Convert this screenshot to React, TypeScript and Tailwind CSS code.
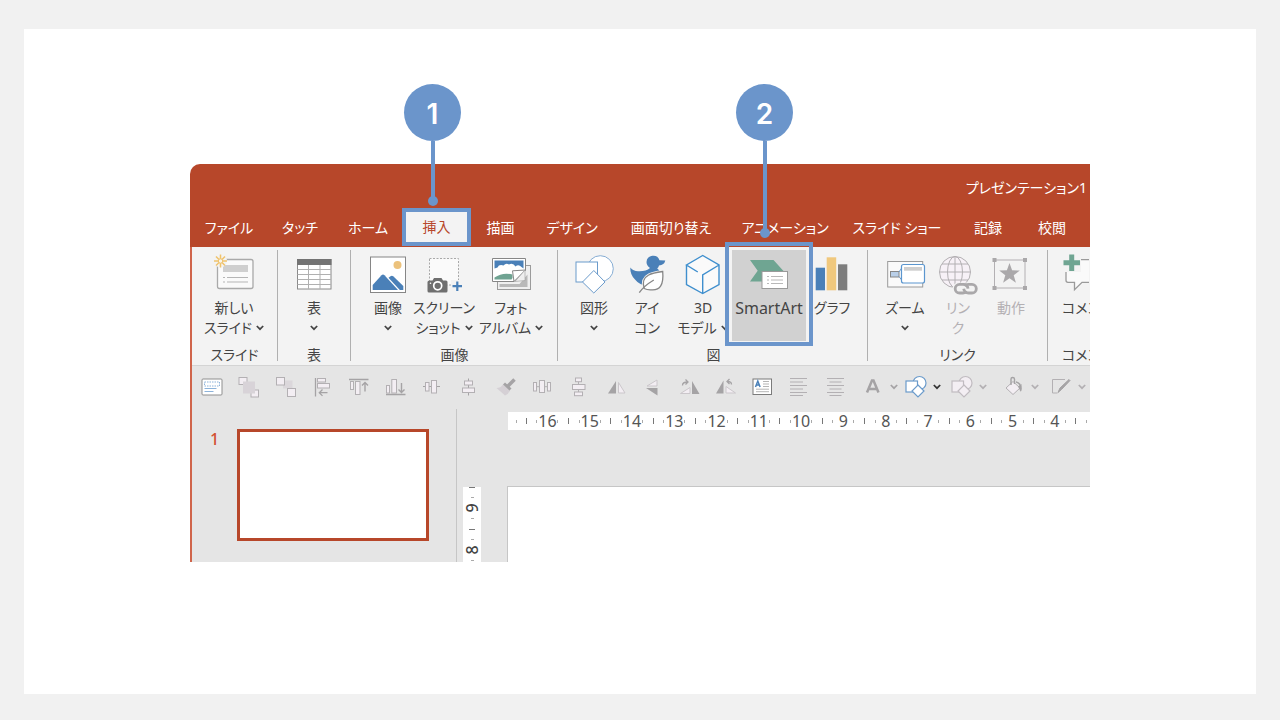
import type { ReactNode } from 'react';

const GRAY = '#b3b0b3';
const BLUE = '#4a80b8';

/* ---------- Ribbon icons (40 x 38) ---------- */

function Icon({ children }: { children: ReactNode }) {
  return (
    <svg className="h-[38px] w-10 shrink-0 overflow-visible" viewBox="0 0 40 38" fill="none" aria-hidden="true">
      {children}
    </svg>
  );
}

const NewSlideIcon = () => (
  <Icon>
    <rect x="3.5" y="4.5" width="35.5" height="29" rx="2" fill="#fafafa" stroke="#a9a9a9" strokeWidth="1.3" />
    <rect x="9" y="10" width="25" height="7" fill="#cfcfcf" />
    <path d="M9 22.5h2M13 22.5h21M9 27h2M13 27h21" stroke="#b5b5b5" />
    <circle cx="6.5" cy="6" r="6.5" fill="#f3f3f3" />
    <path d="M6.5-.5v13M0 6h13M2 1.5l9 9M11 1.5l-9 9" stroke="#f0c36c" strokeWidth="1.5" />
    <circle cx="6.5" cy="6" r="2.2" fill="#f8f4ea" stroke="#f0c36c" />
  </Icon>
);

const TableIcon = () => (
  <Icon>
    <rect x="3.5" y="4.5" width="33.5" height="29.5" fill="#fff" stroke="#8a8a8a" />
    <rect x="3" y="4" width="34.5" height="6" fill="#737373" />
    <path d="M3.5 14.5h33.5M3.5 19.5h33.5M3.5 24.5h33.5M3.5 29.5h33.5M14.5 10v24M26 10v24" stroke="#b0b0b0" />
  </Icon>
);

const PictureIcon = () => (
  <Icon>
    <rect x="2.5" y="2" width="35" height="35.5" fill="#fff" stroke="#868686" />
    <circle cx="29.5" cy="10" r="4" fill="#ecc27c" />
    <path d="M4.7 35v-5L13.500 20.300q1.500-1.400 3 0L30 35z" fill={BLUE} />
    <path d="M20.500 22.800l2-1.600q1.500-1 3 .3L35.300 31v4h-3.500z" fill={BLUE} />
  </Icon>
);

const ScreenshotIcon = () => (
  <Icon>
    <rect x="5.5" y="3.5" width="29" height="26.5" fill="#fafafa" stroke="#a8a8a8" strokeDasharray="2 1.500" />
    <path d="M5.500 25.500h3l1.500-2.500h7.500l1.500 2.500h3q1.500 0 1.500 1.500v9q0 1.500-1.500 1.500H5q-1.500 0-1.500-1.500v-9q0-1.500 2-1.500z" fill="#6f6f6f" />
    <circle cx="13.7" cy="30.8" r="4" stroke="#fff" strokeWidth="1.7" />
    <circle cx="6.5" cy="28.3" r=".8" fill="#fff" />
    <rect x="27" y="25" width="13" height="12" fill="#f3f3f3" />
    <path d="M33.300 26.500v9.500M28.500 31.200h9.500" stroke={BLUE} strokeWidth="2.2" />
  </Icon>
);

const AlbumIcon = () => (
  <Icon>
    <rect x="6.5" y="10.5" width="33" height="24" fill="#efefef" stroke="#9b9b9b" />
    <path d="M8.500 32v-3h20l8-9.500v12.500z" fill="#b9b9b9" />
    <path d="M1.500 3.500h33v11.500L23 26.500H1.500z" fill="#fff" stroke="#868686" />
    <path d="M3.500 5.500h29v8l-2-1.500q-3-3-6-.5-2.500-4-6.500-2-3-2-5.500 1-4.500-1.500-6 2l-3 1z" fill={BLUE} />
    <path d="M3.500 22.500q8-5.500 18-3v3.500l-1 1.500h-17z" fill="#6fa392" />
    <path d="M34.500 15L21.500 15.800 23 26.500z" fill="#fff" stroke="#868686" />
    <path d="M34 15v10.500L24 26.500z" fill="#efefef" stroke="#9b9b9b" strokeWidth=".6" />
  </Icon>
);

const ShapesIcon = () => (
  <Icon>
    <circle cx="26.3" cy="13.7" r="13" fill="#fff" stroke="#86add4" />
    <rect x="2" y="7" width="21.5" height="20" fill="#fff" stroke="#6b9bcb" />
    <path d="M19.800 15.500L31 27 19.800 38 8.500 27z" fill="#fff" stroke="#6b9bcb" />
  </Icon>
);

const DuckIcon = () => (
  <Icon>
    <path d="M19.500 7a6.700 6.700 0 0 1 13-1.800l5.800.4q-1 4.500-6.300 5-.4 1.800-1.800 3 4 2.500 2.800 8.500-2 8-11 8.500-9 .5-14-6Q3 19.500 3.300 12.500q3.200 4 8.200 3.800 7.500.3 11.500-3.300Q19.500 10.500 19.500 7z" fill={BLUE} />
    <path d="M35.700 16.500q1.800 19.500-11.500 18.300-4 .2-7-1.300-3-9.500 4.500-13.500 3.500-2 14-3.500z" fill="#fff" stroke="#f3f3f3" strokeWidth="3" />
    <path d="M35.700 16.500q1.800 19.500-11.500 18.300-4 .2-7-1.300-3-9.500 4.500-13.500 3.500-2 14-3.500z" fill="#fff" stroke="#868686" strokeWidth="1.3" />
    <path d="M12.300 37.700q4.500-6.700 14.500-12.700" stroke="#868686" strokeWidth="1.3" />
  </Icon>
);

const CubeIcon = () => (
  <Icon>
    <path d="M19.700.5L36 10v19.500L19.700 38.500 3.500 29.500V10z" fill="#fafafa" />
    <path d="M14.800 17L3.500 10 19.700.5 36 10v19.500L19.700 38.500 3.500 29.500V10M36 10L19.700 20v18.500" stroke="#3f8fce" strokeWidth="1.4" />
  </Icon>
);

const SmartArtIcon = () => (
  <Icon>
    <path d="M1 5h23.500l10 11v10.500H1l7.700-10.700z" fill="#6fa592" />
    <rect x="13" y="16.5" width="25.5" height="17" fill="#fff" stroke="#9a9a9a" />
    <path d="M18 21.500h2M22 21.500h12M18 25h2M22 25h12M18 28.500h2M22 28.500h12" stroke="#b8b8b8" />
  </Icon>
);

const ChartIcon = () => (
  <Icon>
    <rect x="3.7" y="12.7" width="9.3" height="22.6" fill={BLUE} />
    <rect x="14.7" y="2.3" width="9.5" height="33" fill="#f0c87d" />
    <rect x="26" y="9.3" width="9.3" height="26" fill="#7d7d7d" />
  </Icon>
);

const ZoomIcon = () => (
  <Icon>
    <rect x="2.7" y="6.5" width="35" height="25.5" fill="#fafafa" stroke="#9a9a9a" />
    <rect x="5.5" y="16.5" width="8.5" height="5.5" fill="#b9cfe8" stroke="#868686" />
    <path d="M14 17l3-4.500M14 21.500l3 4" stroke="#6b9bcb" />
    <rect x="16.5" y="9.5" width="23" height="18.5" rx="2" fill="#fff" stroke="#5b96cf" strokeWidth="1.2" />
    <rect x="19" y="12" width="18" height="3.7" fill="#cfcfcf" />
  </Icon>
);

const LinkIcon = () => (
  <Icon>
    <g stroke={GRAY}>
      <circle cx="17" cy="17" r="15.5" fill="#f7f1f7" />
      <ellipse cx="17" cy="17" rx="7.5" ry="15.5" />
      <path d="M17 1.500v31M1.500 17h31M4 9h26M4 25h26" />
    </g>
    <rect x="14.5" y="27.5" width="27" height="13" rx="6" fill="#f3f3f3" />
    <g stroke="#aaa8aa" strokeWidth="2.8">
      <path d="M29 36.500q-1.200 1.500-4 1.500h-3.500a4.300 4.300 0 0 1 0-8.600h4q4 0 4.500 4.300" />
      <path d="M26.500 31q1-1.600 4-1.600H34a4.300 4.300 0 0 1 0 8.600h-3.500q-4 0-4.800-4.300" />
    </g>
  </Icon>
);

const ActionIcon = () => (
  <Icon>
    <rect x="3.5" y="5" width="30.5" height="28" stroke={GRAY} />
    <g fill="#aaa8aa">
      <path d="M1.500 3h4v4h-4zM32 3h4v4h-4zM1.500 31h4v4h-4zM32 31h4v4h-4z" />
      <path d="M18.500 8l2.600 7.300 7.700.2-6.100 4.700 2.200 7.500-6.400-4.400-6.400 4.400 2.200-7.500-6.100-4.700 7.700-.2z" />
    </g>
  </Icon>
);

const CommentIcon = () => (
  <Icon>
    <path d="M19 4.700h8v22.600h-7l-7.500 7.500v-7.500H6q-2 0-2-2V14" fill="#fafafa" />
    <path d="M19 4.700h8M27 27.300h-7l-7.500 7.500v-7.500H6q-2 0-2-2V14" stroke="#9a9a9a" strokeWidth="1.3" />
    <path d="M0-1h19v18H0z" fill="#f3f3f3" />
    <path d="M9.700-.5v16.500M1.500 7.700h16.500" stroke="#6fa592" strokeWidth="5" />
  </Icon>
);

function Chevron({ color = '#444' }: { color?: string }) {
  return (
    <svg className="h-2 w-2 shrink-0" viewBox="0 0 8 8" fill="none" aria-hidden="true">
      <path d="M.8 2L4 5.200 7.200 2" stroke={color} strokeWidth="1.7" />
    </svg>
  );
}

/* ---------- Ribbon ---------- */

type Command = {
  icon: ReactNode;
  lines: string[];
  width: string;
  menu?: boolean;
  disabled?: boolean;
  active?: boolean;
  left?: boolean;
};

type Group = { label: string; className: string; labelClass?: string; commands: Command[] };

const groups: Group[] = [
  {
    label: 'スライド',
    className: 'w-[86px] border-r',
    commands: [{ icon: <NewSlideIcon />, lines: ['新しい', 'スライド'], width: 'w-[84px]', menu: true }],
  },
  {
    label: '表',
    className: 'w-[73px] border-r',
    commands: [{ icon: <TableIcon />, lines: ['表', ''], width: 'w-[72px]', menu: true }],
  },
  {
    label: '画像',
    className: 'w-[207px] border-r pl-[9px]',
    labelClass: 'pr-2',
    commands: [
      { icon: <PictureIcon />, lines: ['画像', ''], width: 'w-14', menu: true },
      { icon: <ScreenshotIcon />, lines: ['スクリーン', 'ショット'], width: 'w-14', menu: true },
      { icon: <AlbumIcon />, lines: ['フォト', 'アルバム'], width: 'w-[78px]', menu: true },
    ],
  },
  {
    label: '図',
    className: 'w-[310px] border-r pl-[10px]',
    labelClass: 'pr-2',
    commands: [
      { icon: <ShapesIcon />, lines: ['図形', ''], width: 'w-[52px]', menu: true },
      { icon: <DuckIcon />, lines: ['アイ', 'コン'], width: 'w-[54px]' },
      { icon: <CubeIcon />, lines: ['3D', 'モデル'], width: 'w-[58px]', menu: true },
      { icon: <SmartArtIcon />, lines: ['SmartArt'], width: 'w-[74px]', active: true },
      { icon: <ChartIcon />, lines: ['グラフ'], width: 'w-[52px]' },
    ],
  },
  {
    label: 'リンク',
    className: 'w-[180px] border-r pl-2',
    labelClass: 'pr-2',
    commands: [
      { icon: <ZoomIcon />, lines: ['ズーム', ''], width: 'w-[58px]', menu: true },
      { icon: <LinkIcon />, lines: ['リン', 'ク'], width: 'w-12', disabled: true },
      { icon: <ActionIcon />, lines: ['動作'], width: 'w-[58px]', disabled: true },
    ],
  },
  {
    label: 'コメント',
    className: 'w-[90px] pl-[14px]',
    labelClass: 'text-left',
    commands: [{ icon: <CommentIcon />, lines: ['コメント'], width: 'w-[60px]', left: true }],
  },
];

function CommandButton({ icon, lines, width, menu, disabled, active, left }: Command) {
  return (
    <button
      type="button"
      disabled={disabled}
      className={`${width} flex h-[91px] shrink-0 flex-col pt-[5px] ${left ? 'items-start' : 'items-center'} ${
        active ? 'bg-[#d1d1d1] text-base' : ''
      } ${disabled ? 'text-[#b3b0b3]' : 'text-[#444]'}`}
    >
      {icon}
      <span className={`mt-[5px] flex flex-col whitespace-nowrap leading-5 ${left ? 'items-start' : 'items-center'}`}>
        {lines.map((line, i) => (
          <span key={i} className="flex h-5 items-center gap-1">
            {line}
            {menu && i === lines.length - 1 && <Chevron />}
          </span>
        ))}
      </span>
    </button>
  );
}

function Ribbon() {
  return (
    <div className="flex overflow-hidden border-b border-[#d4d4d4] bg-[#f3f3f3] pb-1 pt-[3px] text-sm text-[#444]">
      {groups.map((group) => (
        <section key={group.label} className={`${group.className} shrink-0 border-[#b0b0b0]`}>
          <div className="flex">
            {group.commands.map((command) => (
              <CommandButton key={command.lines[0]} {...command} />
            ))}
          </div>
          <h2 className={`${group.labelClass ?? ''} h-5 whitespace-nowrap pt-1 text-center leading-5`}>{group.label}</h2>
        </section>
      ))}
    </div>
  );
}

/* ---------- Quick access toolbar (24 x 24 icons) ---------- */

const LIGHT = '#f3eef3';

const quickTools: { name: string; icon: ReactNode }[] = [
  {
    name: 'layout',
    icon: (
      <>
        <rect x="2" y="4" width="20" height="16" rx="1" fill="#fff" stroke="#8f8f8f" />
        <rect x="4.5" y="7" width="15" height="4" stroke="#8db3da" strokeDasharray="1.500 1" />
        <path d="M4.500 13.500h12M4.500 16.500h9" stroke="#8db3da" />
      </>
    ),
  },
  {
    name: 'bring-forward',
    icon: (
      <>
        <rect x="2" y="2.5" width="8" height="7" fill={LIGHT} stroke={GRAY} />
        <rect x="14" y="15" width="7.5" height="7" fill={LIGHT} stroke={GRAY} />
        <rect x="6" y="6.5" width="12" height="12" fill="#d8d3d8" />
      </>
    ),
  },
  {
    name: 'send-backward',
    icon: (
      <>
        <rect x="9" y="5.5" width="9.5" height="8" fill="#dbd7db" />
        <rect x="2.5" y="2.5" width="8" height="7.5" fill={LIGHT} stroke={GRAY} />
        <rect x="13.5" y="13.5" width="8" height="8" fill={LIGHT} stroke={GRAY} />
      </>
    ),
  },
  {
    name: 'align-left',
    icon: (
      <>
        <path d="M5.500 3v18.500M17.500 17.700H9.500M12.500 14.500l-3.200 3.200 3.200 3.200" stroke="#a5a3a5" strokeWidth="1.3" />
        <rect x="7.5" y="3.5" width="8" height="3.5" fill={LIGHT} stroke={GRAY} />
        <rect x="7.5" y="8.5" width="12" height="4.5" fill={LIGHT} stroke={GRAY} />
      </>
    ),
  },
  {
    name: 'align-top',
    icon: (
      <>
        <path d="M2 4.500h19.500M18 16.500V7.500M15 10.500l3-3 3 3" stroke="#a5a3a5" strokeWidth="1.4" />
        <rect x="3.5" y="6.5" width="3" height="8" fill={LIGHT} stroke={GRAY} />
        <rect x="8.5" y="6.5" width="4.5" height="13" fill={LIGHT} stroke={GRAY} />
      </>
    ),
  },
  {
    name: 'align-bottom',
    icon: (
      <>
        <path d="M2 19.500h19.500M17.500 8v9M14.500 14.500l3 3 3-3" stroke="#a5a3a5" strokeWidth="1.4" />
        <rect x="2.5" y="10.5" width="3" height="7.5" fill={LIGHT} stroke={GRAY} />
        <rect x="7.8" y="4.5" width="4.7" height="13.5" fill={LIGHT} stroke={GRAY} />
      </>
    ),
  },
  {
    name: 'align-middle',
    icon: (
      <>
        <path d="M3 11.500h17" stroke="#a5a3a5" />
        <rect x="5.5" y="7.5" width="3.5" height="8.5" fill={LIGHT} stroke={GRAY} />
        <rect x="11.5" y="5.5" width="5" height="12.5" fill={LIGHT} stroke={GRAY} />
      </>
    ),
  },
  {
    name: 'align-center',
    icon: (
      <>
        <path d="M11.500 3.500v17" stroke="#a5a3a5" />
        <rect x="7.5" y="6" width="8" height="4" fill={LIGHT} stroke={GRAY} />
        <rect x="5.5" y="13" width="12" height="4.5" fill={LIGHT} stroke={GRAY} />
      </>
    ),
  },
  {
    name: 'format-painter',
    icon: (
      <>
        <path d="M2.500 13q4 0 6.500-3.500l7 6q-1.500 3.500-5 5z" fill="#d5d0d5" />
        <path d="M10 8.500l6.500 6" stroke="#a5a3a5" strokeWidth="3" />
        <path d="M13.500 11.500l7-7" stroke="#a5a3a5" strokeWidth="3.5" />
      </>
    ),
  },
  {
    name: 'distribute-horizontally',
    icon: (
      <g fill={LIGHT} stroke={GRAY}>
        <path d="M6 11.700h12" />
        <rect x="3.5" y="7.5" width="3" height="8.5" />
        <rect x="9.5" y="5.5" width="5" height="12" />
        <rect x="17.5" y="7.5" width="3" height="8.5" />
      </g>
    ),
  },
  {
    name: 'distribute-vertically',
    icon: (
      <g fill={LIGHT} stroke={GRAY}>
        <path d="M11.500 7v10" />
        <rect x="8.5" y="3" width="6" height="3.7" />
        <rect x="5.5" y="9.5" width="12.5" height="5" />
        <rect x="7.5" y="17" width="8" height="3.7" />
      </g>
    ),
  },
  {
    name: 'flip-horizontal',
    icon: (
      <>
        <path d="M4 18.500L12 6v12.500z" fill="#a5a3a5" />
        <path d="M14.500 7.500v10.500h6.500z" fill={LIGHT} stroke="#cbc7cb" />
      </>
    ),
  },
  {
    name: 'flip-vertical',
    icon: (
      <>
        <path d="M7 11L17 5v6z" fill={LIGHT} stroke="#cbc7cb" />
        <path d="M6 13h11.500v7.500z" fill="#a5a3a5" />
      </>
    ),
  },
  {
    name: 'rotate-right',
    icon: (
      <>
        <path d="M3.500 18.500l9.500-6v6z" fill={LIGHT} stroke="#cbc7cb" />
        <path d="M15 6l7.500 13H15z" fill="#a5a3a5" />
        <path d="M5.500 10.500q0-3.500 5-3.500M8.500 4.500L11 7l-2.500 2.500" stroke="#a5a3a5" strokeWidth="1.3" />
      </>
    ),
  },
  {
    name: 'rotate-left',
    icon: (
      <>
        <path d="M2 18.500L9.500 5.500v13z" fill="#a5a3a5" />
        <path d="M12 11.500l9.500 6.500H12z" fill={LIGHT} stroke="#cbc7cb" />
        <path d="M17.500 9.500q0-3-4-3M15.500 4l-2.500 2.500L15.500 9" stroke="#a5a3a5" strokeWidth="1.3" />
      </>
    ),
  },
  {
    name: 'text-box',
    icon: (
      <>
        <rect x="3" y="4" width="18.5" height="15.5" fill="#fff" stroke="#7b7b7b" />
        <path d="M5.500 12l2.300-6 2.300 6M6.300 10h3" stroke={BLUE} strokeWidth="1.5" />
        <path d="M13 6.500h6M13 9h6M13 11.500h6M6 14.200h13M6 16.700h13" stroke="#b5b5b5" />
      </>
    ),
  },
  { name: 'text-left', icon: <path d="M3 3.500h17M3 7h13M3 10.500h17M3 14h13M3 17.500h17M3 20.500h13" stroke={GRAY} /> },
  { name: 'text-center', icon: <path d="M3 3.500h17M5.500 7h12M3 10.500h17M5.500 14h12M3 17.500h17M5.500 20.500h12" stroke={GRAY} /> },
];

function smallShapes(stroke: string, fill: string) {
  return (
    <g stroke={stroke} strokeWidth="1.2" fill={fill}>
      <circle cx="15.5" cy="8" r="6.500" />
      <rect x="2" y="6" width="11.5" height="11" />
      <path d="M14 10l6 6-6 6-6-6z" />
    </g>
  );
}

const menuTools = [
  {
    name: 'font-color',
    width: 'w-[43px]',
    chevron: '#a5a3a5',
    icon: <path d="M6 17.500l5-12h1.500l5 12M8 14h7.500" stroke="#a5a3a5" strokeWidth="2.5" />,
  },
  { name: 'shapes', width: 'w-[46px]', chevron: '#333', icon: smallShapes('#6b9bcb', '#fff') },
  { name: 'shape-styles', width: 'w-[52px]', chevron: GRAY, icon: smallShapes('#c0bbc0', LIGHT) },
  {
    name: 'fill',
    width: 'w-[47px]',
    chevron: GRAY,
    icon: (
      <>
        <path d="M4 13l7-6.500 7 6.500-7 6.500z" fill={LIGHT} stroke={GRAY} />
        <path d="M9 10V4q0-1.500 1.700-1.500T12.500 4v5M14 7q5 1 5 7.500" stroke="#a5a3a5" strokeWidth="1.4" />
        <path d="M16 11.500l3.500-2.500v6.500q-1 2-1.500 0z" fill="#a5a3a5" />
      </>
    ),
  },
  {
    name: 'outline',
    width: 'w-[43px]',
    chevron: GRAY,
    icon: (
      <>
        <path d="M16 4.500H3.500v13.500h5" stroke={GRAY} />
        <path d="M9 17.500l2-4.500 9-8.500 1 1-8.500 9z" fill="#a5a3a5" stroke="#a5a3a5" />
      </>
    ),
  },
];

function ToolIcon({ children }: { children: ReactNode }) {
  return (
    <svg className="size-6 shrink-0" viewBox="0 0 24 24" fill="none" aria-hidden="true">
      {children}
    </svg>
  );
}

function QuickToolbar() {
  return (
    <div className="flex h-[43px] items-center overflow-hidden bg-[#e5e5e5] pb-0.5 pl-0.5">
      <div className="grid w-[660px] shrink-0 grid-cols-18">
        {quickTools.map((tool) => (
          <button key={tool.name} type="button" aria-label={tool.name} className="flex justify-center">
            <ToolIcon>{tool.icon}</ToolIcon>
          </button>
        ))}
      </div>
      <div className="flex shrink-0 pl-[7px]">
        {menuTools.map((tool) => (
          <button
            key={tool.name}
            type="button"
            aria-label={tool.name}
            className={`${tool.width} flex shrink-0 items-center gap-[5px]`}
          >
            <ToolIcon>{tool.icon}</ToolIcon>
            <Chevron color={tool.chevron} />
          </button>
        ))}
      </div>
    </div>
  );
}

/* ---------- Editing area ---------- */

const rulerMarks = [16, 15, 14, 13, 12, 11, 10, 9, 8, 7, 6, 5, 4];

function HorizontalRuler() {
  return (
    <div className="ml-[51px] flex h-[18px] overflow-x-clip bg-white text-base leading-[18px] text-[#555]">
      <div className="flex w-[13px] shrink-0 items-center justify-end pr-1">
        <i className="h-[3px] w-px bg-[#aaa]" />
      </div>
      <div className="grid w-[592px] shrink-0 grid-cols-14">
        {rulerMarks.map((n) => (
          <div key={n} className="grid grid-cols-4 items-center">
            <i className="h-[6px] w-px justify-self-center bg-[#777]" />
            <i className="h-[3px] w-px justify-self-center bg-[#aaa]" />
            <span className="flex justify-center">{n}</span>
            <i className="h-[3px] w-px justify-self-center bg-[#aaa]" />
          </div>
        ))}
        <div className="grid grid-cols-4 items-center">
          <i className="h-[6px] w-px justify-self-center bg-[#777]" />
          <i className="h-[3px] w-px justify-self-center bg-[#aaa]" />
        </div>
      </div>
    </div>
  );
}

function VerticalRuler() {
  return (
    <div className="mt-px h-[75px] w-[18px] shrink-0 overflow-hidden bg-white text-base text-[#444]">
      <div className="-mt-[5px]">
        {[9, 8].map((n) => (
          <div key={n} className="grid h-[42px] grid-rows-4 items-center justify-items-center">
            <i className="h-px w-[6px] bg-[#777]" />
            <i className="h-px w-[3px] bg-[#aaa]" />
            <span className="flex h-2 -rotate-90 items-center font-medium">{n}</span>
            <i className="h-px w-[3px] bg-[#aaa]" />
          </div>
        ))}
      </div>
    </div>
  );
}

function Workspace() {
  return (
    <div className="flex bg-[#e5e5e5]">
      <aside className="flex w-[265px] shrink-0 items-start gap-[18px] border-r border-[#c6c6c6] pl-[18px] pt-5">
        <span className="text-base font-medium leading-5 text-[#d2502f]">1</span>
        <div className="h-[112px] w-[192px] border-[3px] border-[#b7472a] bg-white" />
      </aside>
      <main className="min-w-0 flex-1 pt-[3px]">
        <HorizontalRuler />
        <div className="mt-14 flex items-start pl-[6px]">
          <VerticalRuler />
          <div className="ml-[26px] h-[76px] flex-1 border-l border-t border-[#c6c6c6] bg-white" />
        </div>
      </main>
    </div>
  );
}

/* ---------- Window ---------- */

const tabs = [
  { label: 'ファイル', width: 'w-[74px]' },
  { label: 'タッチ', width: 'w-[68px]' },
  { label: 'ホーム', width: 'w-[68px]' },
  { label: '挿入', width: 'w-[69px]', selected: true },
  { label: '描画', width: 'w-[59px]' },
  { label: 'デザイン', width: 'w-[84px]' },
  { label: '画面切り替え', width: 'w-[114px]' },
  { label: 'アニメーション', width: 'w-[114px]' },
  { label: 'スライド ショー', width: 'w-[110px]' },
  { label: '記録', width: 'w-[72px]' },
  { label: '校閲', width: 'w-[56px]' },
];

function TitleBar() {
  return (
    <header className="overflow-hidden rounded-tl-[10px] bg-[#b7472a] text-sm text-white">
      <p className="pr-[3px] pt-[14px] text-right leading-5">プレゼンテーション1</p>
      <nav className="mt-[10px] flex h-[39px] pl-0.5">
        {tabs.map((tab) => (
          <button
            key={tab.label}
            type="button"
            className={`${tab.width} flex shrink-0 items-center justify-center whitespace-nowrap ${
              tab.selected ? 'h-[38px] border-4 border-[#6b95cb] bg-[#f3f3f3] text-[#b7472a]' : 'h-[39px]'
            }`}
          >
            {tab.label}
          </button>
        ))}
      </nav>
    </header>
  );
}

function Callout({ number, className, lineClass }: { number: number; className: string; lineClass: string }) {
  return (
    <div className={`absolute flex w-[57px] flex-col items-center ${className}`}>
      <span className="flex size-[57px] items-center justify-center rounded-full bg-[#6b95cb] pt-0.5 font-[Inter,sans-serif] text-[28px] font-semibold text-white">
        {number}
      </span>
      <span className={`w-1 bg-[#6b95cb] ${lineClass}`} />
      <span className="-mt-[5px] size-[10px] rounded-full bg-[#6b95cb]" />
    </div>
  );
}

export default function App() {
  return (
    <div className="flex min-h-screen bg-[#f1f1f1] px-6 pb-[26px] pt-[29px] font-['Noto_Sans','Noto_Sans_CJK_JP',sans-serif] [font-feature-settings:'palt']">
      <div className="flex-1 bg-white pt-[135px]">
        <div className="relative mx-auto max-w-[900px]">
          <TitleBar />
          <div className="border-l-2 border-[#d0654b]">
            <Ribbon />
            <QuickToolbar />
            <Workspace />
          </div>

          {/* Numbered callouts and the frame around SmartArt */}
          <div className="absolute left-[535px] top-[78px] h-[104px] w-[88px] border-4 border-[#6b95cb]" />
          <Callout number={1} className="-top-20 left-[214px]" lineClass="h-[60px]" />
          <Callout number={2} className="-top-20 left-[546px]" lineClass="h-[92px]" />
        </div>
      </div>
    </div>
  );
}
